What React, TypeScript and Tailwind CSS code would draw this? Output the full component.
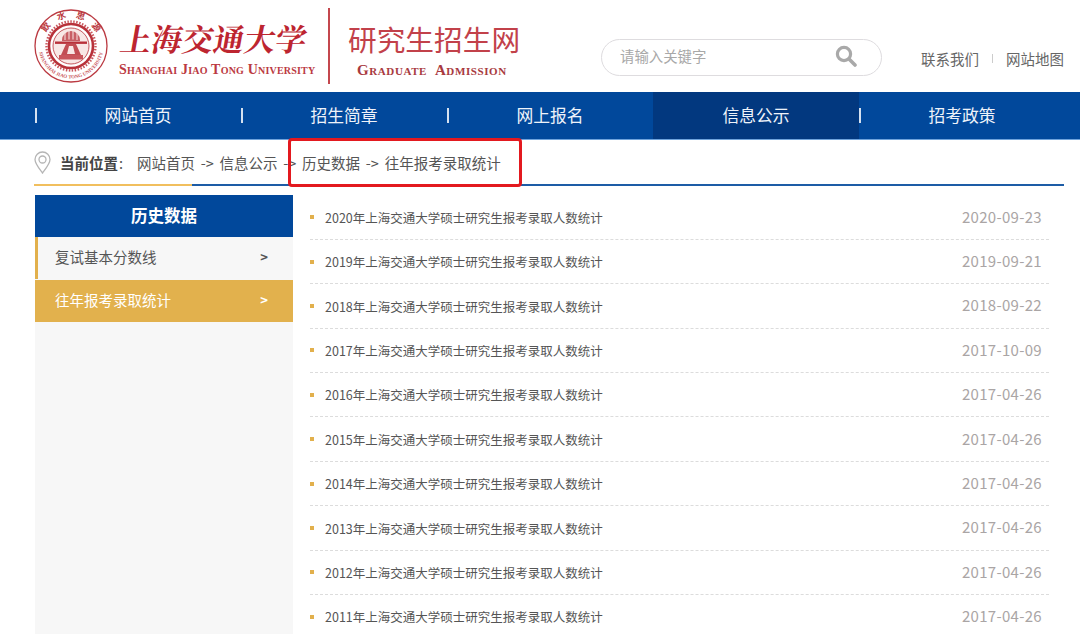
const font = "font-['Noto_Sans_CJK_SC','Noto_Sans',sans-serif]";

const navItems = ["网站首页", "招生简章", "网上报名", "信息公示", "招考政策"];

const rows = [
  ["2020", "2020-09-23"],
  ["2019", "2019-09-21"],
  ["2018", "2018-09-22"],
  ["2017", "2017-10-09"],
  ["2016", "2017-04-26"],
  ["2015", "2017-04-26"],
  ["2014", "2017-04-26"],
  ["2013", "2017-04-26"],
  ["2012", "2017-04-26"],
  ["2011", "2017-04-26"],
];

function Seal() {
  return (
    <svg width="74" height="76" viewBox="0 0 74 76" className="shrink-0">
      <defs>
        <path id="seal-top" d="M8.500 38a28.500 28.500 0 0 1 57 0" />
        <path id="seal-bottom" d="M4.500 38a32.500 32.500 0 0 0 65 0" />
      </defs>
      <circle cx="37" cy="38" r="36" fill="#fff" stroke="#bb3a42" strokeWidth="1.3" />
      <circle cx="37" cy="38" r="24.500" fill="none" stroke="#c9565c" strokeWidth="2.400" strokeDasharray="1.500 1.500" />
      <circle cx="37" cy="38" r="22" fill="#fff" stroke="#b8323a" strokeWidth="2.600" />
      <circle cx="37" cy="38" r="18" fill="#f8e8e6" stroke="#b8323a" strokeWidth="0.800" />
      <text fill="#bb3a42" fontSize="9" fontWeight="700" textAnchor="middle">
        <textPath href="#seal-top" startOffset="50%" textLength="62">
          飲 水 思 源
        </textPath>
      </text>
      <text fill="#c9565c" fontSize="5" fontWeight="700" fontFamily="Liberation Serif, serif" textAnchor="middle">
        <textPath href="#seal-bottom" startOffset="50%">
          SHANGHAI JIAO TONG UNIVERSITY
        </textPath>
      </text>
      <path d="M28 32a9 9 0 0 1 18 0v1H28z" fill="#b8323a" opacity="0.75" />
      <path d="M31 24v8M35 22.500v9M39 22.500v9M43 24v8" stroke="#f8e8e6" strokeWidth="1" />
      <path d="M21 33.500h32v2.400H21z" fill="#b8323a" />
      <path d="M32 36h10l5 11H27z" fill="#b8323a" opacity="0.85" />
      <path d="M25 47h24v4.500H25z" fill="#c9565c" />
      <path d="M35 38h4l2 8h-8z" fill="#f8e8e6" />
    </svg>
  );
}

function Logo() {
  return (
    <div className="flex items-center">
      <Seal />
      <div className="ml-[11px] flex w-[200px] flex-col">
        <div className="h-[46px] origin-left skew-x-[-10deg] whitespace-nowrap pl-[2px] font-['Noto_Serif_CJK_SC','Noto_Sans_CJK_SC',serif] text-[31px] leading-[46px] font-bold text-[#bd2530]">
          上海交通大学
        </div>
        <div className="mt-[1px] font-['Liberation_Serif',serif] text-[14px] leading-[15px] font-bold tracking-[0.2px] whitespace-nowrap text-[#bb3a42] [font-variant:small-caps]">
          Shanghai Jiao Tong University
        </div>
      </div>
      <div className="ml-[9px] h-[76px] w-[2px] bg-[#c4474d]" />
      <div className="ml-[18px] flex w-[175px] flex-col">
        <div className="mt-[3px] text-[28.7px] leading-[42px] whitespace-nowrap text-[#c2414a]">研究生招生网</div>
        <div className="mt-[2px] ml-[9px] font-['Liberation_Serif',serif] text-[15px] leading-[16px] font-bold tracking-[0.6px] whitespace-pre text-[#a83a40] [font-variant:small-caps]">
          Graduate  Admission
        </div>
      </div>
    </div>
  );
}

function Header() {
  return (
    <header className="flex h-[92px] items-center pl-[34px]">
      <Logo />
      <div className="mt-[22px] ml-[78px] flex h-[37px] w-[281px] items-center justify-between rounded-full border border-[#dedcdf] pr-[24px] pl-[18px]">
        <span className="mb-[2px] text-[14.4px] text-[#a8a8a8]">请输入关键字</span>
        <svg width="22" height="22" viewBox="0 0 22 22" fill="none" stroke="#a9a9a9" className="mb-[3px]">
          <circle cx="9" cy="9" r="6.600" strokeWidth="3.200" />
          <path d="M14 14l6 6" strokeWidth="3.600" strokeLinecap="round" />
        </svg>
      </div>
      <div className="mt-[25px] ml-[39px] flex items-center text-[14.5px] whitespace-nowrap text-[#666]">
        <span>联系我们</span>
        <span className="mx-[13px] h-[9px] w-px bg-[#ccc]" />
        <span>网站地图</span>
      </div>
    </header>
  );
}

function Nav() {
  return (
    <nav className="flex h-[48px] border-b border-[#6fa3dc] bg-[#01489b] pl-[35px]">
      {navItems.map((item, i) => (
        <div
          key={item}
          className={`relative flex w-[206px] items-center justify-center text-[16.8px] text-[#eef3fa] ${i === 3 ? "bg-[#02387f]" : ""}`}
        >
          {i !== 3 && <span className="absolute top-[16px] left-0 h-[15px] w-[1.5px] bg-[#d5e1f0]" />}
          {item}
        </div>
      ))}
    </nav>
  );
}

function Breadcrumb() {
  return (
    <div className="relative mx-[34px] flex h-[46px] w-[1030px] items-center pb-[1px] text-[14.5px] whitespace-nowrap text-[#555]">
      <svg width="17" height="23" viewBox="0 0 17 23" fill="none" stroke="#b5b5b5" strokeWidth="1.300" className="mr-[9px]">
        <path d="M8.500 22C4 16 1 12.500 1 8.500a7.500 7.500 0 0 1 15 0c0 4-3 7.500-7.500 13.500z" />
        <circle cx="8.500" cy="8.500" r="3.500" />
      </svg>
      <span className="font-bold text-[#444]">当前位置</span>
      <span className="ml-[1px] w-[18px]">:</span>
      <span>网站首页</span>
      <span className="mx-[5.700px]">-&gt;</span>
      <span>信息公示</span>
      <span className="mx-[5.700px]">-&gt;</span>
      <span>历史数据</span>
      <span className="mx-[5.900px]">-&gt;</span>
      <span>往年报考录取统计</span>
      <div className="absolute right-0 bottom-0 left-0 flex h-[2px]">
        <div className="w-[158px] bg-[#f1bf5e]" />
        <div className="flex-1 bg-[#1d5ca6]" />
      </div>
      <div className="absolute top-[-2px] left-[254px] h-[49px] w-[234px] rounded-[4px] border-[3px] border-[#e3191f]" />
    </div>
  );
}

function Sidebar() {
  return (
    <aside className="h-[439px] w-[258px] shrink-0 bg-[#f7f7f7]">
      <div className="flex h-[42px] items-center justify-center bg-[#01489b] pb-[2px] text-[16.500px] font-bold text-white">历史数据</div>
      <div className="flex h-[42px] items-center justify-between border-l-[3px] border-[#e2b04c] pr-[25px] pb-[2px] pl-[17px] text-[14.5px] text-[#555]">
        <span>复试基本分数线</span>
        <span className="text-[13px] font-bold">&gt;</span>
      </div>
      <div className="mt-[1px] flex h-[42px] items-center justify-between bg-[#e2b14d] pr-[25px] pb-[2px] pl-[20px] text-[14.5px] text-white">
        <span>往年报考录取统计</span>
        <span className="text-[13px] font-bold">&gt;</span>
      </div>
    </aside>
  );
}

function List() {
  return (
    <ul className="mt-[0.500px] ml-[17px] w-[739px]">
      {rows.map(([year, date]) => (
        <li
          key={year}
          className="flex h-[44.400px] items-center border-b border-dashed border-[#dcdcdc] pr-[7px]"
        >
          <span className="mr-[11px] h-[4px] w-[4px] bg-[#e2b04c]" />
          <span className="mt-[2px] flex-1 text-[12.5px] text-[#555]">
            {year}年上海交通大学硕士研究生报考录取人数统计
          </span>
          <span className="mb-[0.500px] text-[15px] tracking-[0.3px] text-[#aaa5a5]">{date}</span>
        </li>
      ))}
    </ul>
  );
}

export default function App() {
  return (
    <div className={`h-[634px] w-[1080px] overflow-hidden bg-white ${font}`}>
      <Header />
      <Nav />
      <Breadcrumb />
      <main className="mt-[9px] ml-[35px] flex">
        <Sidebar />
        <List />
      </main>
    </div>
  );
}
